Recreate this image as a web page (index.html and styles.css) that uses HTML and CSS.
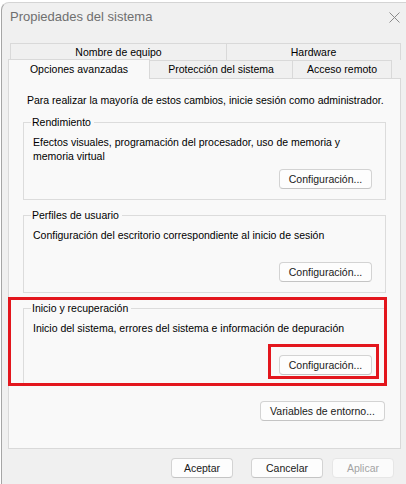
FILE: index.html
```html
<!DOCTYPE html>
<html lang="es">
  <head>
    <meta charset="UTF-8" />
    <meta name="viewport" content="width=device-width, initial-scale=1.0" />
    <title>Propiedades del sistema</title>
    <link rel="stylesheet" href="styles.css">
  </head>
  <body>
    <div class="window">
      <div class="titlebar">
        <span class="title">Propiedades del sistema</span>
        <svg class="close" width="11" height="11" viewBox="0 0 11 11">
          <path d="M0.5 0.5 L10.5 10.5 M10.5 0.5 L0.5 10.5" stroke="#8a8a8a" stroke-width="1" fill="none" />
        </svg>
      </div>

      <div class="tab-row back">
        <div class="tab tab-equipo">Nombre de equipo</div>
        <div class="tab tab-hardware">Hardware</div>
      </div>
      <div class="tab-row front">
        <div class="tab active tab-opciones">Opciones avanzadas</div>
        <div class="tab tab-proteccion">Protección del sistema</div>
        <div class="tab tab-remoto">Acceso remoto</div>
      </div>

      <div class="panel">
        <p class="intro">Para realizar la mayoría de estos cambios, inicie sesión como administrador.</p>

        <fieldset class="group">
          <legend>Rendimiento</legend>
          <p class="desc">Efectos visuales, programación del procesador, uso de memoria y<br>memoria virtual</p>
          <div class="group-actions">
            <button class="btn">Configuración...</button>
          </div>
        </fieldset>

        <fieldset class="group">
          <legend>Perfiles de usuario</legend>
          <p class="desc">Configuración del escritorio correspondiente al inicio de sesión</p>
          <div class="group-actions">
            <button class="btn">Configuración...</button>
          </div>
        </fieldset>

        <fieldset class="group highlighted">
          <legend>Inicio y recuperación</legend>
          <p class="desc">Inicio del sistema, errores del sistema e información de depuración</p>
          <div class="group-actions">
            <span class="marked">
              <button class="btn">Configuración...</button>
            </span>
          </div>
        </fieldset>

        <div class="panel-actions">
          <button class="btn btn-env">Variables de entorno...</button>
        </div>
      </div>

      <div class="footer">
        <button class="btn btn-ok">Aceptar</button>
        <button class="btn btn-cancel">Cancelar</button>
        <button class="btn btn-apply" disabled>Aplicar</button>
      </div>
    </div>
  </body>
</html>
```

FILE: styles.css
```css
html,
body {
  margin: 0;
  padding: 0;
  overflow: hidden;
}

body {
  background-color: #ffffff;
  font-family: "Liberation Sans", Arial, sans-serif;
  font-size: 10.5px;
  color: #000;
}

.window {
  margin: 2px 0 0 1px;
  width: 404px;
  height: 482px;
  background-color: #f0f0f0;
  border-top: 1px solid #d4d4d4;
  border-left: 1px solid #a6a6a6;
  border-top-left-radius: 8px;
}

.titlebar {
  height: 40px;
  display: flex;
  justify-content: space-between;
  align-items: flex-start;
  padding: 6px 6px 0 8px;
  box-sizing: border-box;
}

.title {
  font-size: 13px;
  line-height: 16px;
  color: #6f6f6f;
}

.close {
  margin-top: 3px;
}

.tab-row {
  display: flex;
}

.tab-row.back {
  margin-left: 8px;
  height: 17px;
}

.tab-row.front {
  margin-left: 6px;
  height: 18px;
  position: relative;
}

.tab {
  box-sizing: border-box;
  border: 1px solid #d9d9d9;
  border-bottom: none;
  background-color: #f0f0f0;
  text-align: center;
  line-height: 17px;
}

.tab-row.back .tab {
  line-height: 16px;
}

.tab + .tab {
  border-left: none;
}

.tab-equipo { width: 217px; }
.tab-hardware { width: 174px; }
.tab-opciones { width: 142px; }
.tab-proteccion { width: 143px; }
.tab-remoto { width: 99px; }

.tab.active {
  background-color: #f9f9f9;
  height: 20px;
  margin-top: -1px;
  line-height: 18px;
  position: relative;
  z-index: 1;
}

.panel {
  margin-left: 6px;
  width: 393px;
  height: 371px;
  box-sizing: border-box;
  background-color: #f9f9f9;
  border: 1px solid #d9d9d9;
  padding: 14px 14px 0 14px;
}

.intro {
  margin: 0 0 8px 4px;
  line-height: 14px;
  white-space: nowrap;
}

.group {
  margin: 0 0 8px 0;
  padding: 0 13px 10px 9px;
  border: 1px solid #dcdcdc;
  min-inline-size: 0;
  position: relative;
}

.group legend {
  padding: 0 3px 0 1px;
  margin-left: -2px;
  line-height: 14px;
}

.desc {
  margin: 6px 0 0 0;
  height: 28px;
  line-height: 14px;
  white-space: nowrap;
}

.group-actions {
  display: flex;
  justify-content: flex-end;
  margin-top: 6px;
}

.btn {
  font-family: "Liberation Sans", Arial, sans-serif;
  font-size: 10.5px;
  color: #1a1a1a;
  height: 20px;
  padding: 0;
  background-color: #fdfdfd;
  border: 1px solid #d3d3d3;
  border-bottom-color: #c4c4c4;
  border-radius: 4px;
  width: 93px;
}

.marked {
  position: relative;
  display: inline-block;
  height: 20px;
}

.marked::after {
  content: "";
  position: absolute;
  left: -11px;
  top: -11px;
  right: -7px;
  bottom: -4px;
  border: 3px solid #e3161d;
}

.highlighted::after {
  content: "";
  position: absolute;
  left: -16px;
  top: -18px;
  right: -2px;
  bottom: -1px;
  border: 3px solid #e3161d;
  pointer-events: none;
}

.panel-actions {
  display: flex;
  justify-content: flex-end;
  margin-top: 15px;
  padding-right: 1px;
}

.btn-env {
  width: 125px;
}

.footer {
  display: flex;
  justify-content: flex-end;
  gap: 9px;
  margin-top: 9px;
  padding-right: 12px;
}

.btn-ok {
  width: 62px;
  margin-right: 9px;
}

.btn-cancel {
  width: 72px;
}

.btn-apply {
  width: 62px;
  color: #a3a3a3;
  background-color: #fbfbfb;
  border-color: #e6e6e6;
}
```
